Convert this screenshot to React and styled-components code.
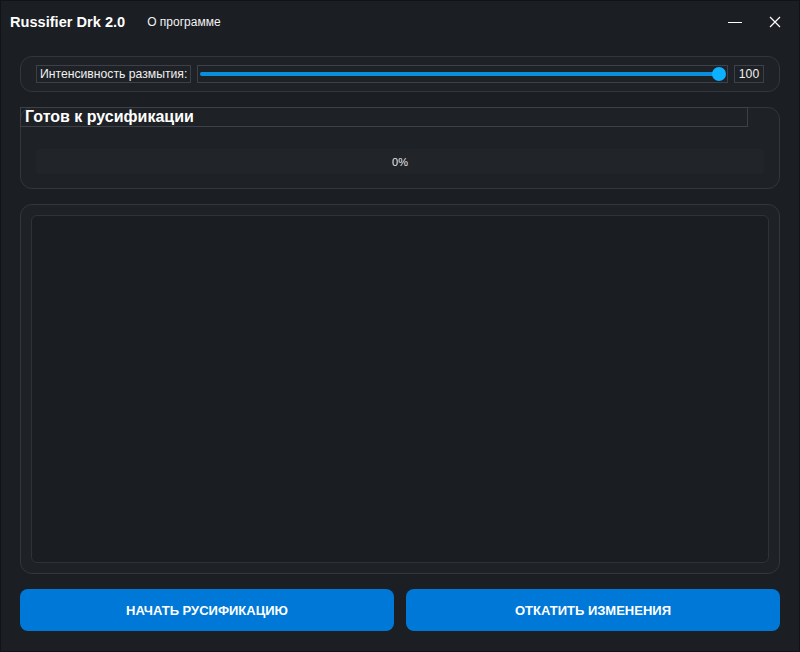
import React, { useState } from 'react'
import styled, { createGlobalStyle } from 'styled-components'

const GlobalStyle = createGlobalStyle`
    html, body {
        margin: 0;
        padding: 0;
        background: #1b1e22;
    }
    body {
        font-family: Arial, "Liberation Sans", sans-serif;
        color: #ffffff;
    }
`

function App() {
    const [blur, setBlur] = useState(100);
    const progress = 0;

  return (
    <WindowStyled>
        <GlobalStyle />
        <div className="titlebar">
            <div className="title-left">
                <h1>Russifier Drk 2.0</h1>
                <MenuItem>О программе</MenuItem>
            </div>
            <div className="controls">
                <WinButton aria-label="minimize">
                    <svg width="16" height="16" viewBox="0 0 16 16">
                        <line x1="1" y1="8.5" x2="15" y2="8.5" stroke="#fff" strokeWidth="1" />
                    </svg>
                </WinButton>
                <WinButton aria-label="close">
                    <svg width="14" height="14" viewBox="0 0 14 14">
                        <path d="M2 2 L12 12 M12 2 L2 12" stroke="#fff" strokeWidth="1.2" />
                    </svg>
                </WinButton>
            </div>
        </div>

        <Content>
            <Panel $pad="8px 15px 8px 15px">
                <SliderRow>
                    <BoxLabel>Интенсивность размытия:</BoxLabel>
                    <SliderFrame>
                        <Track>
                            <Fill style={{ width: `${blur}%` }} />
                            <Handle style={{ left: `${blur}%` }} />
                        </Track>
                    </SliderFrame>
                    <BoxLabel $center>{blur}</BoxLabel>
                </SliderRow>
            </Panel>

            <Panel $pad="0 15px 14px 15px">
                <StatusTitle>Готов к русификации</StatusTitle>
                <Progress>
                    <span>{progress}%</span>
                </Progress>
            </Panel>

            <Panel $grow $pad="10px">
                <LogArea />
            </Panel>

            <Actions>
                <ActionButton>НАЧАТЬ РУСИФИКАЦИЮ</ActionButton>
                <ActionButton>ОТКАТИТЬ ИЗМЕНЕНИЯ</ActionButton>
            </Actions>
        </Content>
    </WindowStyled>
  )
}

const WindowStyled = styled.div`
    width: 800px;
    height: 652px;
    box-sizing: border-box;
    border: 1px solid #111316;
    background: #1b1e22;
    display: flex;
    flex-direction: column;
    .titlebar{
        height: 42px;
        display: flex;
        align-items: center;
        justify-content: space-between;
        padding: 0 9px 0 9px;
    }
    .title-left{
        display: flex;
        align-items: center;
        gap: 22px;
        h1{
            margin: 0;
            font-size: 14.6px;
            font-weight: 700;
            color: #ffffff;
        }
    }
    .controls{
        display: flex;
        align-items: center;
        gap: 10px;
    }
`

const MenuItem = styled.span`
    font-size: 12px;
    color: #f2f2f2;
`

const WinButton = styled.button`
    width: 30px;
    height: 30px;
    border: none;
    background: transparent;
    display: flex;
    align-items: center;
    justify-content: center;
    padding: 0;
    cursor: pointer;
`

const Content = styled.div`
    flex: 1;
    display: flex;
    flex-direction: column;
    gap: 15px;
    padding: 13px 19px 20px 19px;
`

const Panel = styled.div`
    background: #1e2125;
    border: 1px solid #33373c;
    border-radius: 12px;
    padding: ${props => props.$pad};
    display: flex;
    flex-direction: column;
    ${props => props.$grow && 'flex: 1;'}
`

const SliderRow = styled.div`
    display: flex;
    align-items: center;
    gap: 6px;
`

const BoxLabel = styled.div`
    border: 1px solid #3d4147;
    height: 16px;
    line-height: 16px;
    padding: 0 3px;
    font-size: 12.2px;
    color: #f0f0f0;
    ${props => props.$center && 'width: 22px; text-align: center;'}
`

const SliderFrame = styled.div`
    flex: 1;
    height: 16px;
    border: 1px solid #3d4147;
    display: flex;
    align-items: center;
    padding: 0 8px 0 2px;
`

const Track = styled.div`
    position: relative;
    flex: 1;
    height: 4px;
    border-radius: 2px;
    background: #3a3f45;
`

const Fill = styled.div`
    height: 100%;
    border-radius: 2px;
    background: #0a8fdc;
`

const Handle = styled.div`
    position: absolute;
    top: 50%;
    width: 14px;
    height: 14px;
    margin: -7px 0 0 -7px;
    border-radius: 50%;
    background: #0cb0ff;
`

const StatusTitle = styled.div`
    margin: -1px 16px 0 -16px;
    border: 1px solid #3d4147;
    height: 18px;
    line-height: 18px;
    padding: 0 4px;
    font-size: 16px;
    font-weight: 700;
    color: #ffffff;
`

const Progress = styled.div`
    margin-top: 22px;
    height: 25px;
    background: #212428;
    border-radius: 3px;
    display: flex;
    align-items: center;
    justify-content: center;
    span{
        font-size: 11px;
        color: #e8e8e8;
    }
`

const LogArea = styled.div`
    flex: 1;
    background: #1a1d21;
    border: 1px solid #2f3338;
    border-radius: 6px;
`

const Actions = styled.div`
    display: flex;
    gap: 12px;
    margin-top: 0;
`

const ActionButton = styled.button`
    flex: 1;
    height: 42px;
    border: none;
    border-radius: 8px;
    background: #0078d7;
    color: #ffffff;
    font-family: Arial, "Liberation Sans", sans-serif;
    font-size: 13px;
    font-weight: 700;
    cursor: pointer;
`

export default App
